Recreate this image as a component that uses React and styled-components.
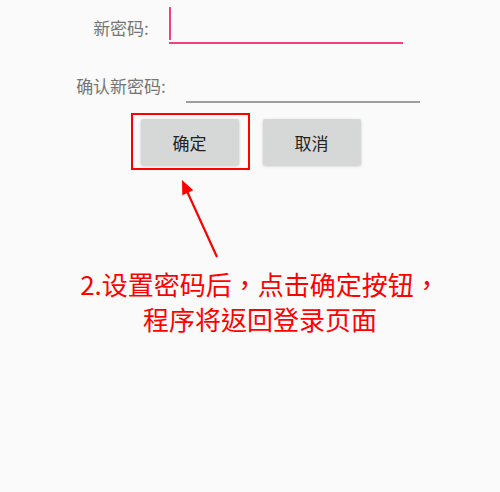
import React from 'react'
import styled, { createGlobalStyle } from 'styled-components'

const GlobalStyle = createGlobalStyle`
    body {
        margin: 0;
        background: #fafafa;
        font-family: "Noto Sans CJK SC", "Noto Sans", sans-serif;
    }
`
const Page = styled.div`
    width: 500px;
    height: 492px;
    display: flex;
    flex-direction: column;
`
const Form = styled.div`
    display: flex;
    flex-direction: column;
    gap: 15px;
`
const Row = styled.div`
    display: flex;
    justify-content: center;
    align-items: flex-end;
    gap: 20px;
    padding-right: 4px;
`
const Label = styled.span`
    font-size: 17px;
    line-height: 24px;
    color: #757575;
    margin-bottom: ${props => props.$drop}px;
`
const Field = styled.div`
    position: relative;
    width: 234px;
    height: 44px;
    box-sizing: border-box;
    border-bottom: 2px solid ${props => props.$focused ? '#f5407f' : '#9e9e9e'};
    ${props => props.$focused && `
        &::before {
            content: "";
            position: absolute;
            left: 0;
            top: 7px;
            width: 2px;
            height: 33px;
            background: #f5407f;
        }
    `}
`
const ButtonRow = styled.div`
    display: flex;
    justify-content: center;
    gap: 24px;
    margin-top: 16px;
    padding-left: 1px;
`
const Highlight = styled.div`
    position: relative;
    display: flex;
    &::after {
        content: "";
        position: absolute;
        top: -6px;
        bottom: -5px;
        left: -10px;
        right: -11px;
        border: 2px solid #ff0000;
    }
`
const Button = styled.button`
    width: 98px;
    height: 46px;
    border: none;
    border-radius: 2px;
    background: #d6d7d7;
    box-shadow: 0 1px 3px rgba(0, 0, 0, 0.22);
    font-family: "Noto Sans CJK SC", "Noto Sans", sans-serif;
    font-size: 17px;
    color: #222;
    padding: 0;
`
const Arrow = styled.svg`
    display: block;
    margin-top: 6px;
`
const Note = styled.p`
    margin: 0;
    padding-left: 20px;
    font-family: "Noto Sans CJK TC", "Noto Sans CJK SC", sans-serif;
    font-size: 26px;
    line-height: 35px;
    color: #ff0000;
    text-align: center;
`

const App = () => {
  return (
    <Page>
        <GlobalStyle/>
        <Form>
            <Row>
                <Label $drop={4}>新密码:</Label>
                <Field $focused/>
            </Row>
            <Row>
                <Label $drop={5}>确认新密码:</Label>
                <Field/>
            </Row>
        </Form>
        <ButtonRow>
            <Highlight>
                <Button>确定</Button>
            </Highlight>
            <Button>取消</Button>
        </ButtonRow>
        <Arrow width="500" height="95" viewBox="0 0 500 95">
            <line x1="217" y1="86" x2="186" y2="18" stroke="#ff0000" strokeWidth="2.2"/>
            <polygon points="182,9 193.3,19.2 182.3,24.2" fill="#ff0000"/>
        </Arrow>
        <Note>
            2.设置密码后，点击确定按钮，<br/>
            程序将返回登录页面
        </Note>
    </Page>
  )
}

export default App
